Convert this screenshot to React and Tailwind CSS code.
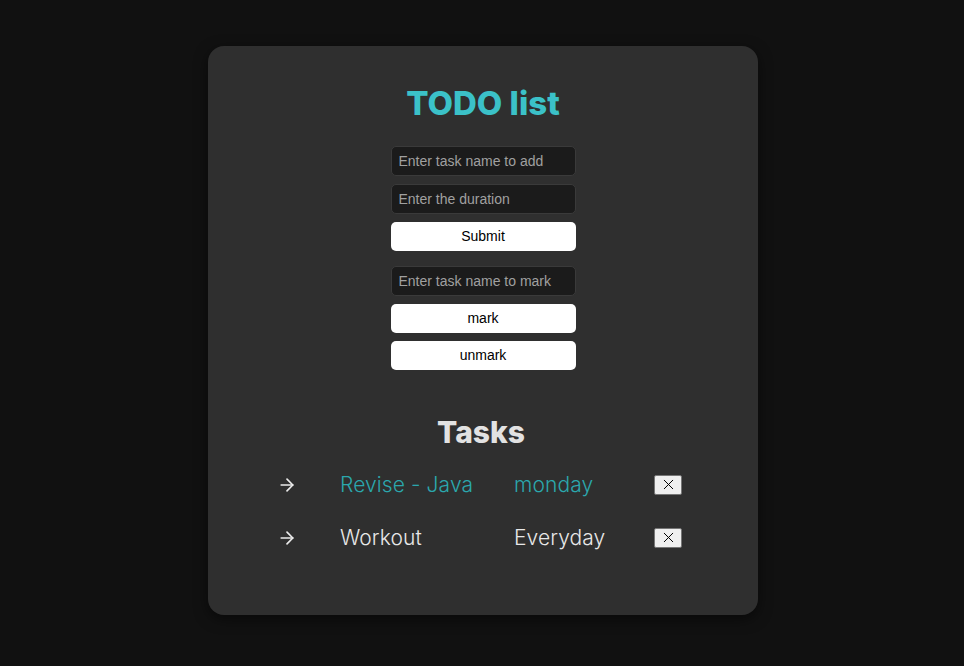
import React, { useState } from 'react';
import { ArrowRight, X } from 'lucide-react';

const font = { fontFamily: 'Inter, "Noto Sans", sans-serif' };

const TaskRow = ({ name, duration, done, onRemove }) => (
    <div className="grid grid-cols-[60px_174px_140px_28px] items-center h-[53px]">
        <ArrowRight className="w-[20px] h-[20px] text-[#ececec] -ml-[3px] mt-[1px]" strokeWidth={2} />
        <span className={`text-[21px] font-light tracking-[0.1px] mt-[1px] ${done ? 'text-[#2ba7ad]' : 'text-[#e8e8e8]'}`}>{name}</span>
        <span className={`text-[21px] font-light tracking-[0.1px] mt-[1px] ${done ? 'text-[#2ba7ad]' : 'text-[#e8e8e8]'}`}>{duration}</span>
        <button
            onClick={onRemove}
            className="w-[28px] h-[20px] bg-[#efefef] border border-[#767676] rounded-[2px] flex items-center justify-center text-black"
        >
            <X className="w-[17px] h-[17px]" strokeWidth={1.4} />
        </button>
    </div>
);

export default function App() {
    const [tasks, setTasks] = useState([
        { name: 'Revise - Java', duration: 'monday', done: true },
        { name: 'Workout', duration: 'Everyday', done: false },
    ]);

    const inputCls =
        "w-[185px] h-[30px] px-[7px] bg-[#1b1b1b] border border-[#3a3a3a] rounded-[5px] text-[14px] text-[#ddd] placeholder:text-[#a0a0a0] outline-none font-['Liberation_Sans',sans-serif]";
    const btnCls =
        "w-[185px] h-[29px] bg-white rounded-[5px] text-[14px] text-black font-['Liberation_Sans',sans-serif]";

    return (
        <div className="min-h-screen bg-[#111111] flex justify-center pt-[46px] pl-[2px]" style={font}>
            <div className="w-[550px] h-[569px] bg-[#2f2f2f] rounded-[16px] shadow-[0_4px_14px_rgba(0,0,0,0.5)] flex flex-col items-center pt-[81px]">
                <h1 className="text-[33px] leading-[48px] font-extrabold text-[#3bc1c8] -mt-[48px]">TODO list</h1>
                <div className="flex flex-col items-center mt-[19px]">
                    <input className={inputCls} placeholder="Enter task name to add" />
                    <input className={`${inputCls} mt-[8px]`} placeholder="Enter the duration" />
                    <button className={`${btnCls} mt-[8px]`}>Submit</button>
                    <input className={`${inputCls} mt-[15px]`} placeholder="Enter task name to mark" />
                    <button className={`${btnCls} mt-[8px]`}>mark</button>
                    <button className={`${btnCls} mt-[8px]`}>unmark</button>
                </div>
                <h2 className="text-[30px] leading-[45px] font-extrabold text-[#e2e2e2] mt-[40px] -ml-[4px]">Tasks</h2>
                <div className="self-start pl-[72px] mt-[3px]">
                    {tasks.map((t, i) => (
                        <TaskRow
                            key={t.name}
                            {...t}
                            onRemove={() => setTasks(tasks.filter((_, j) => j !== i))}
                        />
                    ))}
                </div>
            </div>
        </div>
    );
}
